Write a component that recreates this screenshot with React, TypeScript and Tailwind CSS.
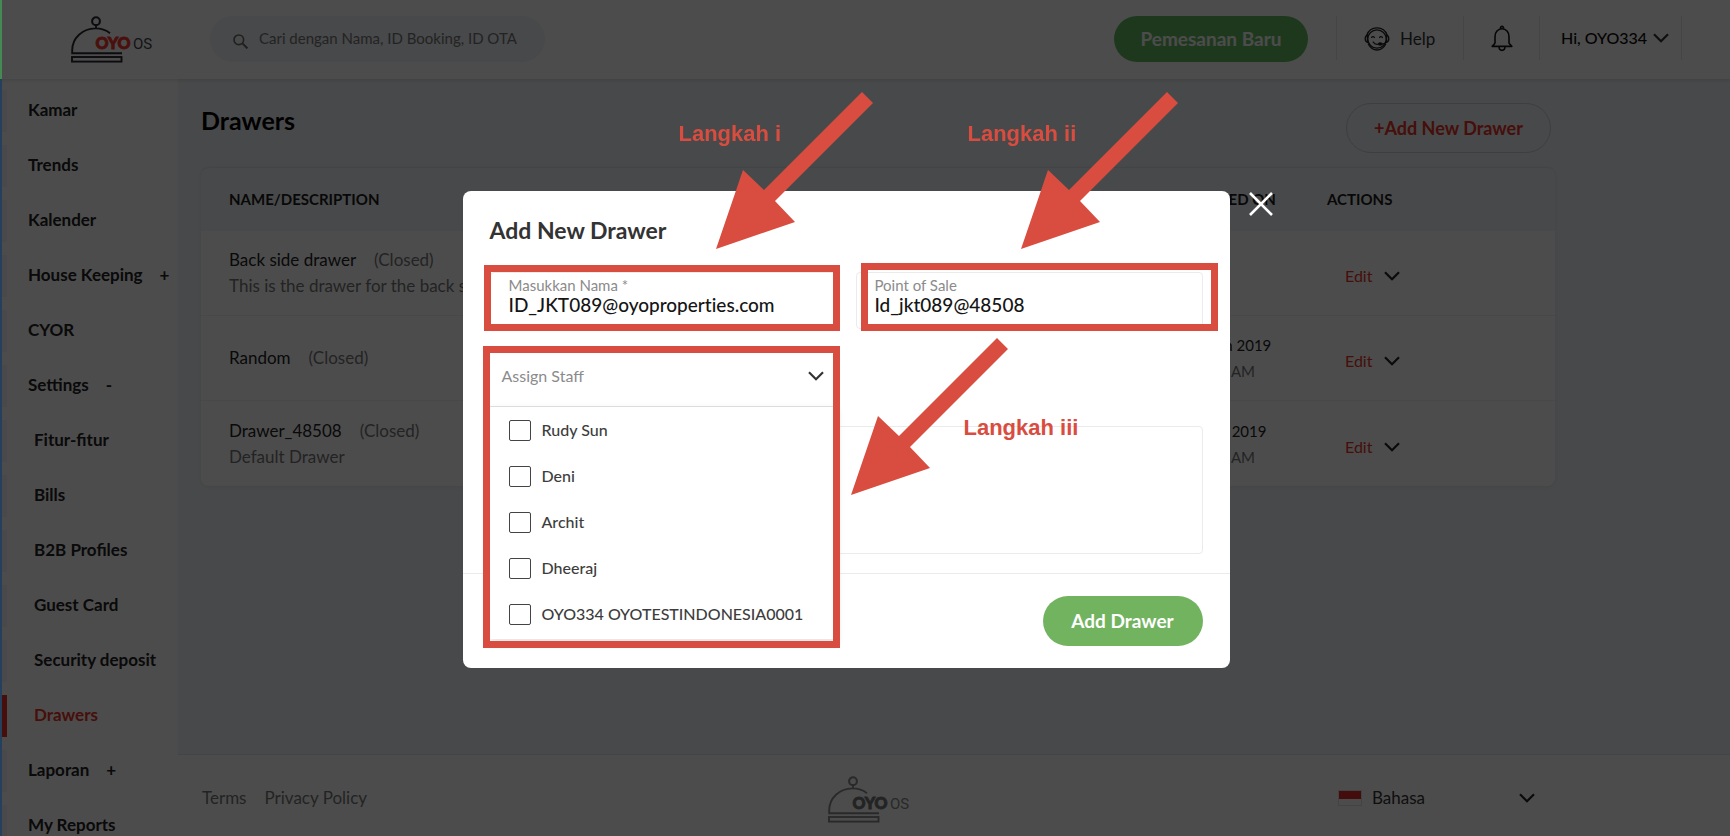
import React from "react";

type NavItem = { label: string; sub?: boolean; active?: boolean; toggle?: string };

const NAV: NavItem[] = [
  { label: "Kamar" },
  { label: "Trends" },
  { label: "Kalender" },
  { label: "House Keeping", toggle: "+" },
  { label: "CYOR" },
  { label: "Settings", toggle: "-" },
  { label: "Fitur-fitur", sub: true },
  { label: "Bills", sub: true },
  { label: "B2B Profiles", sub: true },
  { label: "Guest Card", sub: true },
  { label: "Security deposit", sub: true },
  { label: "Drawers", sub: true, active: true },
  { label: "Laporan", toggle: "+" },
  { label: "My Reports" },
];

const ROWS = [
  { name: "Back side drawer", note: "This is the drawer for the back side", date: "", time: "" },
  { name: "Random", note: "", date: "24 Jun 2019", time: "11:32 AM" },
  { name: "Drawer_48508", note: "Default Drawer", date: "24 Jul 2019", time: "11:15 AM" },
];

const STAFF = ["Rudy Sun", "Deni", "Archit", "Dheeraj", "OYO334 OYOTESTINDONESIA0001"];

function Chevron({ className = "" }: { className?: string }) {
  return (
    <svg className={className} width="16" height="10" viewBox="0 0 16 10" fill="none" stroke="currentColor" strokeWidth="2.2" aria-hidden="true">
      <path d="M1 1.2 8 8.2 15 1.2" />
    </svg>
  );
}

function Logo({ muted = false }: { muted?: boolean }) {
  const line = muted ? "#8a8a8a" : "#2b2b33";
  return (
    <svg width="84" height="48" viewBox="0 0 84 48" role="img" aria-label="OYO OS">
      <g fill="none" stroke={line} strokeWidth="1.9">
        <circle cx="26" cy="5.2" r="3.9" strokeWidth="2.1" />
        <path d="M26 9v3.4M52 37.3H2.2v-3C2.2 22 12.6 12.4 25.500 12.400c5.600 0 10.500 1.600 14.500 4.800" />
        <rect x="2" y="41" width="49.500" height="4.600" />
      </g>
      <text x="25.500" y="32.500" fontFamily="Lato, sans-serif" fontWeight="900" fontSize="16" fill={muted ? "#777777" : "#f5382c"} stroke={muted ? "#777777" : "#f5382c"} strokeWidth="0.9">
        OYO
      </text>
      <text x="63" y="32.500" fontFamily="Roboto, sans-serif" fontSize="15" fill={muted ? "#8a8a8a" : "#44444c"}>
        OS
      </text>
    </svg>
  );
}

function Headset() {
  return (
    <svg width="26" height="24" viewBox="0 0 26 24" fill="none" stroke="#222222" strokeWidth="1.3" strokeLinecap="round" aria-hidden="true">
      <circle cx="13" cy="12" r="9.200" />
      <path d="M2.800 8.200C4.300 3.800 8.300.9 13 .9s8.700 2.900 10.200 7.300" />
      <path d="M3.400 8.200C1.700 8.800 1.200 10.200 1.200 11.800s.5 3 2.200 3.600zM22.600 8.200c1.700.6 2.200 2 2.200 3.600s-.5 3-2.200 3.600z" />
      <path d="M4.400 17.200C6.200 20.700 9.400 23 13 23s6.800-2.300 8.600-5.800" />
      <path d="M7.500 10.600c.7-1.300 2.300-1.300 3 0M15.500 10.600c.7-1.300 2.300-1.300 3 0" strokeWidth="1.1" />
      <path d="M9.200 15c1.200 2 3.400 2.700 5.600 2" />
      <path d="M22.200 15.200c-1.200 1.400-2.800 1.900-4.600 1.800" />
      <ellipse cx="16.200" cy="16.900" rx="1.700" ry="1.100" fill="#222222" />
    </svg>
  );
}

function Bell() {
  return (
    <svg width="22" height="27" viewBox="0 0 22 27" fill="none" stroke="#161616" strokeWidth="1.6" strokeLinejoin="round" aria-hidden="true">
      <path d="M4 18.500V11.500c0-4.200 2.900-7.800 7-7.800s7 3.600 7 7.800v7" />
      <path d="M9.400 3.800c-.2-3.200 3.400-3.200 3.200 0" />
      <path d="M4 18.200 1.200 21.400h19.600L18 18.200" />
      <path d="M8 21.600c0 5 6 5 6 0" />
    </svg>
  );
}

function Arrow({ className }: { className: string }) {
  return (
    <svg className={`pointer-events-none absolute ${className}`} width="157" height="157" viewBox="0 0 157 157" fill="#d94d40" aria-hidden="true">
      <polygon points="0,157 27,78 48,98 146,0 157,11 59,109 79,130" />
    </svg>
  );
}

function Field({ id, label, value }: { id: string; label: string; value: string }) {
  return (
    <div className="flex h-[57px] flex-col rounded border border-[#ebebeb] pt-[3px] pl-[18px]">
      <label htmlFor={id} className="text-[15px] leading-[18px] text-[#8b8b8b]">{label}</label>
      <input id={id} defaultValue={value} className="h-[22px] w-full bg-transparent text-[19px] leading-[22px] font-medium text-[#151515] outline-none [font-variant-ligatures:none]" />
    </div>
  );
}

function Header() {
  return (
    <header className="relative z-10 flex h-[79px] shrink-0 items-start bg-white pt-4 pr-12 pl-[70px] shadow-[0_1px_4px_rgba(0,0,0,0.14)]">
      <a href="#home" className="w-[140px] shrink-0"><Logo /></a>
      <label className="flex h-[46px] w-[335px] items-center gap-[11px] rounded-full bg-[#f0f3f7] pl-[23px]">
        <svg className="mt-1" width="15" height="15" viewBox="0 0 15 15" fill="none" stroke="#6a6a6a" strokeWidth="1.600" aria-hidden="true">
          <circle cx="5.800" cy="5.800" r="4.800" />
          <path d="m9.400 9.400 5 5" strokeWidth="2" />
        </svg>
        <input aria-label="Cari" placeholder="Cari dengan Nama, ID Booking, ID OTA" className="min-w-0 flex-1 bg-transparent pb-0.5 text-[15px] outline-none placeholder:text-[#777777]" />
      </label>
      <button className="ml-auto h-[46px] w-[194px] rounded-full bg-[#67bd62] text-[19px] font-bold text-white">Pemesanan Baru</button>
      <div className="ml-7 flex h-[44px] text-base">
        <button className="flex w-[127px] items-center gap-2.5 border-l border-[#e6e6e6] pt-0.5 pl-[27px] text-[17px] text-[#333333]">
          <Headset />
          Help
        </button>
        <button aria-label="Notifikasi" className="flex w-[76px] items-center justify-center border-l border-[#e6e6e6]"><Bell /></button>
        <button className="flex w-[143px] items-center justify-between border-x border-[#e6e6e6] pr-3 pl-[21px] font-medium text-[#0a0a0a]">
          Hi, OYO334
          <Chevron className="text-[#333333]" />
        </button>
      </div>
    </header>
  );
}

function Sidebar() {
  return (
    <nav className="flex w-[178px] shrink-0 flex-col gap-[13px] overflow-hidden bg-white pt-[11px] pl-0.5">
      {NAV.map((item) => (
        <a
          key={item.label}
          href="#nav"
          className={`flex h-[42px] shrink-0 items-center gap-[17px] border-l-[5px] pb-[3px] text-[17px] font-bold whitespace-nowrap ${item.sub ? "pl-[27px]" : "pl-[21px]"} ${item.active ? "border-[#ea3526] text-[#ea3526]" : "border-[#f3f6fa] text-[#222222]"}`}
        >
          <span>{item.label}</span>
          {item.toggle && <span>{item.toggle}</span>}
        </a>
      ))}
    </nav>
  );
}

function DrawerTable() {
  return (
    <table className="mt-3.5 w-full table-fixed border-separate border-spacing-0 rounded-lg border-t border-[#e2e4e6] text-left text-[17px] shadow-[0_1px_4px_rgba(0,0,0,0.07)]">
      <colgroup>
        <col />
        <col className="w-[147px]" />
        <col className="w-[228px]" />
      </colgroup>
      <thead className="text-[15px] text-[#1c1c1c]">
        <tr className="h-[63px]">
          <th className="pl-7 font-bold">NAME/DESCRIPTION</th>
          <th className="pl-0.5 font-bold whitespace-nowrap">CREATED ON</th>
          <th className="font-bold">ACTIONS</th>
        </tr>
      </thead>
      <tbody>
        {ROWS.map((row, i) => {
          const line = i < ROWS.length - 1 ? "border-b border-[#f0f0f0]" : "";
          return (
            <tr key={row.name} className="h-[85px]">
              <td className={`bg-white pl-7 leading-[26px] ${line} ${i === 2 ? "rounded-bl-lg" : ""}`}>
                <div className="text-[#222222]">
                  {row.name}
                  <span className="ml-[18px] text-[#777777]">(Closed)</span>
                </div>
                {row.note && <div className="text-[#777777]">{row.note}</div>}
              </td>
              <td className={`bg-white pl-[9px] text-[15px] leading-[26px] ${line}`}>
                <div className="text-[#222222]">{row.date}</div>
                <div className="text-[#777777]">{row.time}</div>
              </td>
              <td className={`bg-white pt-1.5 pl-[18px] ${line} ${i === 2 ? "rounded-br-lg" : ""}`}>
                <button className="flex items-center gap-3 text-base text-[#ea3526]">
                  Edit
                  <Chevron className="text-[#222222]" />
                </button>
              </td>
            </tr>
          );
        })}
      </tbody>
    </table>
  );
}

function Footer() {
  return (
    <footer className="flex h-[82px] shrink-0 items-center border-t border-[#e2e8ee] bg-white pl-6 text-[17px] text-[#777777]">
      <div className="flex flex-1 gap-[18px] pt-1">
        <a href="#terms">Terms</a>
        <a href="#privacy">Privacy Policy</a>
      </div>
      <div className="pt-2"><Logo muted /></div>
      <div className="flex flex-1 items-center justify-end pt-1 pr-[195px]">
        <button className="flex w-[197px] items-center text-[#333333]">
          <span className="mr-2.5 flex h-4 w-6 flex-col border border-[#e2e2e2]">
            <span className="h-2 bg-[#e0282e]" />
          </span>
          Bahasa
          <Chevron className="ml-auto text-[#222222]" />
        </button>
      </div>
    </footer>
  );
}

function Callout({ className, children }: { className: string; children: React.ReactNode }) {
  return (
    <span className={`absolute font-['Liberation_Sans',sans-serif] text-[22px] leading-6 font-bold whitespace-nowrap text-[#d94d40] ${className}`}>
      {children}
    </span>
  );
}

function AddDrawerDialog() {
  return (
    <div className="fixed inset-0 z-20 flex items-start justify-center bg-black/70 pt-[191px] pr-[38px]">
      <section role="dialog" aria-modal="true" aria-labelledby="dialog-title" className="relative w-[767px] rounded-lg bg-white">
        <button aria-label="Tutup" className="absolute top-px left-full ml-[19px]">
          <svg width="24" height="24" viewBox="0 0 24 24" stroke="#ffffff" strokeWidth="2.600" aria-hidden="true">
            <path d="M1 1 23 23M23 1 1 23" />
          </svg>
        </button>
        <div className="px-[27px] pt-[23px] pb-[19px]">
          <h2 id="dialog-title" className="mb-[26px] text-[23px] leading-8 font-bold text-[#333333]">Add New Drawer</h2>
          <div className="grid grid-cols-2 gap-x-[19px] gap-y-5">
            <Field id="drawer-name" label="Masukkan Nama *" value="ID_JKT089@oyoproperties.com" />
            <Field id="point-of-sale" label="Point of Sale" value="Id_jkt089@48508" />
            <div className="relative">
              <button aria-expanded="true" className="flex h-[57px] w-full items-center justify-between pr-[13px] pb-1 pl-3 text-base text-[#8b8b8b]">
                Assign Staff
                <Chevron className="text-[#333333]" />
              </button>
              <ul className="absolute inset-x-0 top-full z-10 border-t border-[#dddddd] bg-white pb-0.5 shadow-[0_4px_8px_rgba(0,0,0,0.12)]">
                {STAFF.map((name) => (
                  <li key={name}>
                    <label className="flex h-[46px] items-center gap-[11px] pl-[19px] text-base font-medium text-[#3d3d3d]">
                      <input type="checkbox" className="h-[21px] w-[22px] appearance-none rounded-[2px] border border-[#444444] bg-white" />
                      {name}
                    </label>
                  </li>
                ))}
              </ul>
            </div>
            <textarea aria-label="Description" className="col-span-2 h-32 resize-none rounded border border-[#ebebeb]" />
          </div>
        </div>
        <div className="flex justify-end border-t border-[#ebebeb] px-[27px] pt-[22px] pb-[22px]">
          <button className="h-[50px] w-40 rounded-full bg-[#72b35f] text-[19px] font-bold text-white">Add Drawer</button>
        </div>

        <div className="pointer-events-none absolute inset-0 z-20">
          <div className="absolute top-[74px] left-[21px] h-[66px] w-[356px] border-[7px] border-[#d94d40]" />
          <div className="absolute top-[72px] left-[398px] h-[68px] w-[357px] border-[7px] border-[#d94d40]" />
          <div className="absolute top-[155px] left-5 h-[302px] w-[357px] border-[7px] border-[#d94d40]" />
          <Arrow className="-top-[99px] left-[253px]" />
          <Arrow className="-top-[99px] left-[558px]" />
          <Arrow className="top-[147px] left-[388px]" />
          <Callout className="-top-[69px] left-[216px]">Langkah i</Callout>
          <Callout className="-top-[69px] left-[505px]">Langkah ii</Callout>
          <Callout className="top-[225px] left-[501px]">Langkah iii</Callout>
        </div>
      </section>
    </div>
  );
}

export default function App() {
  return (
    <div className="flex h-screen flex-col overflow-hidden bg-white font-['Lato',sans-serif]">
      <Header />
      <div className="flex min-h-0 flex-1">
        <Sidebar />
        <div className="flex min-w-0 flex-1 flex-col bg-[#f1f4f7]">
          <main className="min-h-0 flex-1 pt-6 pr-[175px] pl-[23px]">
            <div className="flex items-start justify-between pr-1">
              <h1 className="text-[25px] leading-[34px] font-bold text-black">Drawers</h1>
              <button className="h-[50px] w-[205px] rounded-full border border-[#d0d0d0] text-[18px] font-bold text-[#ea3526]">+Add New Drawer</button>
            </div>
            <DrawerTable />
          </main>
          <Footer />
        </div>
      </div>
      <AddDrawerDialog />
      <div aria-hidden="true" className="fixed inset-y-0 left-0 z-30 flex w-0.5 flex-col">
        <span className="h-[79px] bg-[#458a52]" />
        <span className="flex-1 bg-[#24405c]" />
      </div>
    </div>
  );
}
